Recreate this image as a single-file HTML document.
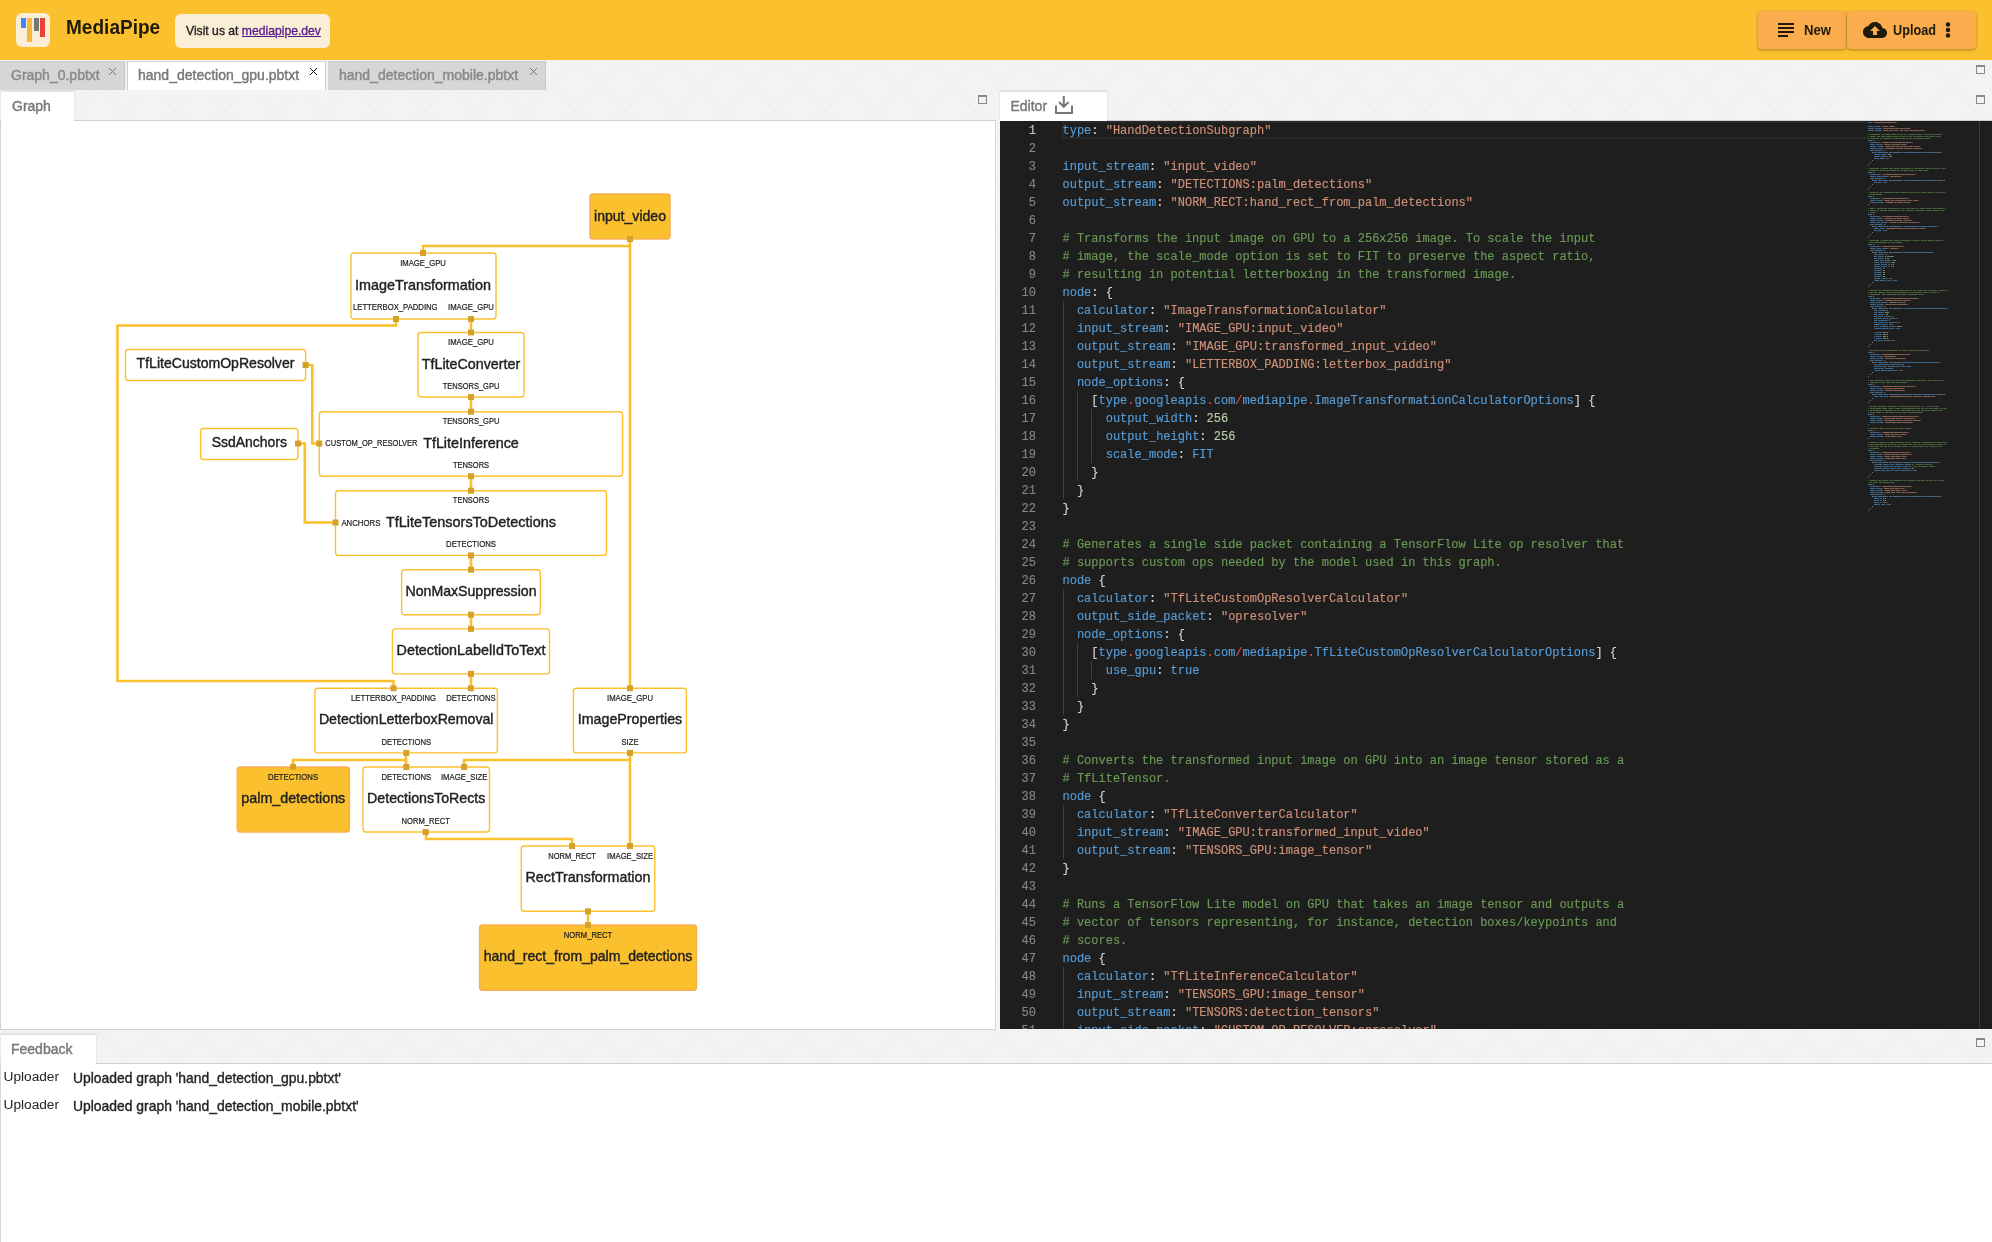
<!DOCTYPE html>
<html><head><meta charset="utf-8">
<style>
html,body{margin:0;padding:0;width:1992px;height:1242px;overflow:hidden;background:#f3f3f3;font-family:"Liberation Sans",sans-serif;}
#root{position:absolute;left:0;top:0;width:1992px;height:1242px;will-change:transform;}
.med{-webkit-text-stroke:0.25px currentColor;}
.a{position:absolute;}
#hdr{left:0;top:0;width:1992px;height:60px;background:#FBC02D;}
.logo{left:16px;top:13px;width:34px;height:34px;background:#FBEED6;border-radius:6px;}
.bar{position:absolute;top:5px;width:5px;}
.brand{left:66px;top:15.3px;font-size:20.6px;font-weight:bold;color:#1f1a0c;transform:scaleX(0.925);transform-origin:0 0;}
.visit{left:175px;top:14px;width:155px;height:34px;background:#FBEED6;border-radius:6px;}
.visit span{position:absolute;left:10.5px;top:9px;font-size:13px;font-weight:normal;color:#222;-webkit-text-stroke:0.35px currentColor;white-space:nowrap;transform:scaleX(0.935);transform-origin:0 0;}
.visit a{color:#551A8B;text-decoration:underline;}
.btn{top:11px;height:38px;background:#FBAC4D;border-radius:4px;box-shadow:0 1px 3px rgba(0,0,0,0.35);}
.btn span{position:absolute;font-size:14px;font-weight:bold;color:#1f1a0c;top:11px;white-space:nowrap;}
.tab{top:61px;height:29px;font-size:14px;color:#888;white-space:nowrap;}
.tab .t{position:absolute;left:11px;top:6px;-webkit-text-stroke:0.4px currentColor;}
.tab.in{background:#d6d6d6;box-shadow:inset -1px 0 0 #c8c8c8, inset 0 1px 0 #cfcfcf;}
.tab.ac{background:#fff;color:#777;box-shadow:inset 1px 0 0 #d0d0d0, inset 0 1px 0 #d8d8d8, 1px 0 0 #cdcdcd;}
.x{position:absolute;width:7px;height:7px;}
.max{width:7px;height:6px;border:1px solid #888;border-top-width:2px;}
.stab{height:30px;background:#fff;font-size:14px;color:#777;white-space:nowrap;box-shadow:0 -1px 2px rgba(0,0,0,0.12);}
.stab .t{position:absolute;left:11px;top:6px;-webkit-text-stroke:0.4px currentColor;}
#editor{left:1000px;top:121px;width:992px;height:908px;background:#1E1E1E;overflow:hidden;}
.ln{position:absolute;left:0;width:36px;text-align:right;font:12px/18px "Liberation Mono",monospace;height:18px;-webkit-text-stroke:0.15px currentColor;}
.cl{position:absolute;left:62.5px;font:12px/18px "Liberation Mono",monospace;white-space:pre;color:#D4D4D4;height:18px;-webkit-text-stroke:0.15px currentColor;}
.ig{position:absolute;width:1px;background:#404040;}
</style></head><body><div id="root">
<svg class="a" style="left:0;top:0" width="1992" height="1242">
<defs><pattern id="diag" width="50" height="50" patternUnits="userSpaceOnUse" x="25" y="10">
<path d="M0,0 L50,50 M50,0 L0,50" stroke="#ececec" stroke-width="1"/></pattern></defs>
<rect x="0" y="60" width="1992" height="1182" fill="url(#diag)"/>
</svg>

<div id="hdr" class="a">
 <div class="a logo">
  <div class="bar" style="left:5px;height:10px;background:#4285F4"></div>
  <div class="bar" style="left:11px;height:23.5px;background:#F6B73C"></div>
  <div class="bar" style="left:18px;height:13px;background:#777"></div>
  <div class="bar" style="left:24px;height:18.5px;background:#EA4335"></div>
 </div>
 <div class="a brand">MediaPipe</div>
 <div class="a visit"><span>Visit us at <a>mediapipe.dev</a></span></div>
 <div class="a btn" style="left:1758px;width:88px;">
  <svg class="a" style="left:20px;top:12px" width="16" height="14"><rect x="0" y="0" width="16" height="2" fill="#1f1a0c"/><rect x="0" y="4" width="16" height="2" fill="#1f1a0c"/><rect x="0" y="8" width="16" height="2" fill="#1f1a0c"/><rect x="0" y="12" width="10" height="2" fill="#1f1a0c"/></svg>
  <span style="left:45.5px;transform:scaleX(0.94);transform-origin:0 0">New</span>
 </div>
 <div class="a btn" style="left:1847px;width:129px;">
  <svg class="a" style="left:16px;top:11px" width="24" height="16" viewBox="0 4 24 16"><path fill="#1f1a0c" d="M19.35 10.04C18.67 6.59 15.64 4 12 4 9.11 4 6.6 5.64 5.35 8.04 2.34 8.36 0 10.91 0 14c0 3.31 2.69 6 6 6h13c2.76 0 5-2.24 5-5 0-2.64-2.05-4.78-4.65-4.96zM14 13v4h-4v-4H7l5-5 5 5h-3z"/></svg>
  <span style="left:45.5px;transform:scaleX(0.905);transform-origin:0 0">Upload</span>
  <svg class="a" style="left:98px;top:11px" width="6" height="16"><circle cx="3" cy="2.5" r="2.2" fill="#1f1a0c"/><circle cx="3" cy="8" r="2.2" fill="#1f1a0c"/><circle cx="3" cy="13.5" r="2.2" fill="#1f1a0c"/></svg>
 </div>
</div>

<!-- top tabs -->
<div class="a tab in" style="left:0;width:125px;"><span class="t">Graph_0.pbtxt</span>
 <svg class="x" style="left:109px;top:7px" width="7" height="7"><path d="M0,0L7,7M7,0L0,7" stroke="#6a6a6a" stroke-width="0.9"/></svg></div>
<div class="a tab ac" style="left:127px;width:198px;"><span class="t">hand_detection_gpu.pbtxt</span>
 <svg class="x" style="left:183px;top:7px" width="7" height="7"><path d="M0,0L7,7M7,0L0,7" stroke="#111" stroke-width="1"/></svg></div>
<div class="a tab in" style="left:328px;width:218px;"><span class="t">hand_detection_mobile.pbtxt</span>
 <svg class="x" style="left:202px;top:7px" width="7" height="7"><path d="M0,0L7,7M7,0L0,7" stroke="#6a6a6a" stroke-width="0.9"/></svg></div>
<div class="a max" style="left:1976px;top:65px;"></div>

<!-- graph stack header -->
<div class="a" style="left:0;top:120px;width:996px;height:1px;background:#cfcfcf"></div>
<div class="a stab" style="left:1px;top:92px;width:73px;height:29px;"><span class="t" style="top:6px">Graph</span></div>
<div class="a max" style="left:978px;top:95px;"></div>
<!-- graph content -->
<div class="a" style="left:0;top:121px;width:996px;height:909px;background:#fff;box-shadow:inset 1px 0 0 #d6d6d6, inset -1px 0 0 #d6d6d6, inset 0 -1px 0 #d0d0d0;"></div>
<svg width="996" height="1029" style="position:absolute;left:0;top:0" font-family='"Liberation Sans", sans-serif'><polyline points="630.0,239.0 630.0,246.0 423.0,246.0 423.0,253.0" fill="none" stroke="#FBC02D" stroke-width="2.6"/><polyline points="630.0,246.0 630.0,688.0" fill="none" stroke="#FBC02D" stroke-width="2.6"/><polyline points="396.0,319.0 396.0,325.5 117.5,325.5 117.5,681.0 393.5,681.0 393.5,688.0" fill="none" stroke="#FBC02D" stroke-width="2.6"/><polyline points="471.0,319.0 471.0,332.5" fill="none" stroke="#FBC02D" stroke-width="2.6"/><polyline points="471.0,397.0 471.0,411.5" fill="none" stroke="#FBC02D" stroke-width="2.6"/><polyline points="305.6,365.0 312.3,365.0 312.3,443.5 319.0,443.5" fill="none" stroke="#FBC02D" stroke-width="2.6"/><polyline points="298.0,443.5 304.8,443.5 304.8,522.5 335.5,522.5" fill="none" stroke="#FBC02D" stroke-width="2.6"/><polyline points="471.0,476.0 471.0,490.5" fill="none" stroke="#FBC02D" stroke-width="2.6"/><polyline points="471.0,555.5 471.0,570.0" fill="none" stroke="#FBC02D" stroke-width="2.6"/><polyline points="471.0,614.5 471.0,629.0" fill="none" stroke="#FBC02D" stroke-width="2.6"/><polyline points="471.0,674.0 471.0,688.0" fill="none" stroke="#FBC02D" stroke-width="2.6"/><polyline points="406.0,753.0 406.0,760.0 293.0,760.0 293.0,767.0" fill="none" stroke="#FBC02D" stroke-width="2.6"/><polyline points="406.0,760.0 406.0,767.0" fill="none" stroke="#FBC02D" stroke-width="2.6"/><polyline points="630.0,753.0 630.0,760.0 464.0,760.0 464.0,767.0" fill="none" stroke="#FBC02D" stroke-width="2.6"/><polyline points="630.0,760.0 630.0,846.0" fill="none" stroke="#FBC02D" stroke-width="2.6"/><polyline points="426.0,832.0 426.0,839.0 572.0,839.0 572.0,846.0" fill="none" stroke="#FBC02D" stroke-width="2.6"/><polyline points="588.0,911.0 588.0,925.0" fill="none" stroke="#FBC02D" stroke-width="2.6"/><rect x="590.0" y="194.0" width="80.0" height="45.0" rx="3" fill="#FBC02D" stroke="#F9AE55" stroke-width="1.5"/><text x="630.0" y="221.2" font-size="14.5" font-weight="normal" text-anchor="middle" textLength="72.0" lengthAdjust="spacingAndGlyphs" fill="#212121" stroke="#212121" stroke-width="0.4">input_video</text><rect x="351.0" y="253.0" width="145.0" height="66.0" rx="3" fill="#fff" stroke="#FBC02D" stroke-width="1.4"/><text x="423.0" y="266.1" font-size="8.6" font-weight="normal" text-anchor="middle" textLength="45.7" lengthAdjust="spacingAndGlyphs" fill="#212121" stroke="#212121" stroke-width="0.2">IMAGE_GPU</text><text x="423.0" y="289.6" font-size="14.5" font-weight="normal" text-anchor="middle" textLength="136.0" lengthAdjust="spacingAndGlyphs" fill="#212121" stroke="#212121" stroke-width="0.4">ImageTransformation</text><text x="395.3" y="310.1" font-size="8.6" font-weight="normal" text-anchor="middle" textLength="84.6" lengthAdjust="spacingAndGlyphs" fill="#212121" stroke="#212121" stroke-width="0.2">LETTERBOX_PADDING</text><text x="471.0" y="310.1" font-size="8.6" font-weight="normal" text-anchor="middle" textLength="45.9" lengthAdjust="spacingAndGlyphs" fill="#212121" stroke="#212121" stroke-width="0.2">IMAGE_GPU</text><rect x="418.0" y="332.5" width="106.0" height="64.5" rx="3" fill="#fff" stroke="#FBC02D" stroke-width="1.4"/><text x="471.0" y="345.1" font-size="8.6" font-weight="normal" text-anchor="middle" textLength="45.9" lengthAdjust="spacingAndGlyphs" fill="#212121" stroke="#212121" stroke-width="0.2">IMAGE_GPU</text><text x="471.0" y="368.6" font-size="14.5" font-weight="normal" text-anchor="middle" textLength="98.5" lengthAdjust="spacingAndGlyphs" fill="#212121" stroke="#212121" stroke-width="0.4">TfLiteConverter</text><text x="471.0" y="388.8" font-size="8.6" font-weight="normal" text-anchor="middle" textLength="56.7" lengthAdjust="spacingAndGlyphs" fill="#212121" stroke="#212121" stroke-width="0.2">TENSORS_GPU</text><rect x="125.5" y="349.5" width="180.1" height="31.0" rx="3" fill="#fff" stroke="#FBC02D" stroke-width="1.4"/><text x="215.5" y="368.3" font-size="14.5" font-weight="normal" text-anchor="middle" textLength="157.8" lengthAdjust="spacingAndGlyphs" fill="#212121" stroke="#212121" stroke-width="0.4">TfLiteCustomOpResolver</text><rect x="200.6" y="428.5" width="97.4" height="31.0" rx="3" fill="#fff" stroke="#FBC02D" stroke-width="1.4"/><text x="249.3" y="447.3" font-size="14.5" font-weight="normal" text-anchor="middle" textLength="75.3" lengthAdjust="spacingAndGlyphs" fill="#212121" stroke="#212121" stroke-width="0.4">SsdAnchors</text><rect x="319.3" y="411.7" width="303.3" height="64.5" rx="3" fill="#fff" stroke="#FBC02D" stroke-width="1.4"/><text x="471.0" y="424.1" font-size="8.6" font-weight="normal" text-anchor="middle" textLength="56.7" lengthAdjust="spacingAndGlyphs" fill="#212121" stroke="#212121" stroke-width="0.2">TENSORS_GPU</text><text x="471.0" y="447.6" font-size="14.5" font-weight="normal" text-anchor="middle" textLength="95.7" lengthAdjust="spacingAndGlyphs" fill="#212121" stroke="#212121" stroke-width="0.4">TfLiteInference</text><text x="471.0" y="467.8" font-size="8.6" font-weight="normal" text-anchor="middle" textLength="36.2" lengthAdjust="spacingAndGlyphs" fill="#212121" stroke="#212121" stroke-width="0.2">TENSORS</text><text x="325.3" y="446.1" font-size="8.6" font-weight="normal" text-anchor="start" textLength="92.2" lengthAdjust="spacingAndGlyphs" fill="#212121" stroke="#212121" stroke-width="0.2">CUSTOM_OP_RESOLVER</text><rect x="335.5" y="490.7" width="271.0" height="64.7" rx="3" fill="#fff" stroke="#FBC02D" stroke-width="1.4"/><text x="471.0" y="503.2" font-size="8.6" font-weight="normal" text-anchor="middle" textLength="36.3" lengthAdjust="spacingAndGlyphs" fill="#212121" stroke="#212121" stroke-width="0.2">TENSORS</text><text x="471.0" y="526.6" font-size="14.5" font-weight="normal" text-anchor="middle" textLength="170.0" lengthAdjust="spacingAndGlyphs" fill="#212121" stroke="#212121" stroke-width="0.4">TfLiteTensorsToDetections</text><text x="471.0" y="547.2" font-size="8.6" font-weight="normal" text-anchor="middle" textLength="49.8" lengthAdjust="spacingAndGlyphs" fill="#212121" stroke="#212121" stroke-width="0.2">DETECTIONS</text><text x="341.4" y="525.6" font-size="8.6" font-weight="normal" text-anchor="start" textLength="39.0" lengthAdjust="spacingAndGlyphs" fill="#212121" stroke="#212121" stroke-width="0.2">ANCHORS</text><rect x="401.6" y="569.7" width="138.7" height="45.0" rx="3" fill="#fff" stroke="#FBC02D" stroke-width="1.4"/><text x="471.0" y="595.6" font-size="14.5" font-weight="normal" text-anchor="middle" textLength="131.0" lengthAdjust="spacingAndGlyphs" fill="#212121" stroke="#212121" stroke-width="0.4">NonMaxSuppression</text><rect x="392.4" y="628.9" width="157.1" height="45.0" rx="3" fill="#fff" stroke="#FBC02D" stroke-width="1.4"/><text x="471.0" y="654.9" font-size="14.5" font-weight="normal" text-anchor="middle" textLength="148.8" lengthAdjust="spacingAndGlyphs" fill="#212121" stroke="#212121" stroke-width="0.4">DetectionLabelIdToText</text><rect x="314.9" y="688.3" width="182.5" height="64.6" rx="3" fill="#fff" stroke="#FBC02D" stroke-width="1.4"/><text x="393.5" y="701.1" font-size="8.6" font-weight="normal" text-anchor="middle" textLength="85.0" lengthAdjust="spacingAndGlyphs" fill="#212121" stroke="#212121" stroke-width="0.2">LETTERBOX_PADDING</text><text x="470.9" y="701.1" font-size="8.6" font-weight="normal" text-anchor="middle" textLength="49.4" lengthAdjust="spacingAndGlyphs" fill="#212121" stroke="#212121" stroke-width="0.2">DETECTIONS</text><text x="406.2" y="724.1" font-size="14.5" font-weight="normal" text-anchor="middle" textLength="174.6" lengthAdjust="spacingAndGlyphs" fill="#212121" stroke="#212121" stroke-width="0.4">DetectionLetterboxRemoval</text><text x="406.3" y="744.9" font-size="8.6" font-weight="normal" text-anchor="middle" textLength="49.7" lengthAdjust="spacingAndGlyphs" fill="#212121" stroke="#212121" stroke-width="0.2">DETECTIONS</text><rect x="573.4" y="688.3" width="113.0" height="64.6" rx="3" fill="#fff" stroke="#FBC02D" stroke-width="1.4"/><text x="630.0" y="701.1" font-size="8.6" font-weight="normal" text-anchor="middle" textLength="46.0" lengthAdjust="spacingAndGlyphs" fill="#212121" stroke="#212121" stroke-width="0.2">IMAGE_GPU</text><text x="630.0" y="724.1" font-size="14.5" font-weight="normal" text-anchor="middle" textLength="104.4" lengthAdjust="spacingAndGlyphs" fill="#212121" stroke="#212121" stroke-width="0.4">ImageProperties</text><text x="630.0" y="744.9" font-size="8.6" font-weight="normal" text-anchor="middle" textLength="17.0" lengthAdjust="spacingAndGlyphs" fill="#212121" stroke="#212121" stroke-width="0.2">SIZE</text><rect x="237.3" y="767.0" width="112.1" height="65.0" rx="3" fill="#FBC02D" stroke="#F9AE55" stroke-width="1.5"/><text x="293.1" y="780.1" font-size="8.6" font-weight="normal" text-anchor="middle" textLength="50.0" lengthAdjust="spacingAndGlyphs" fill="#212121" stroke="#212121" stroke-width="0.2">DETECTIONS</text><text x="293.3" y="803.0" font-size="14.5" font-weight="normal" text-anchor="middle" textLength="103.9" lengthAdjust="spacingAndGlyphs" fill="#212121" stroke="#212121" stroke-width="0.4">palm_detections</text><rect x="363.0" y="767.0" width="126.5" height="65.0" rx="3" fill="#fff" stroke="#FBC02D" stroke-width="1.4"/><text x="406.3" y="780.1" font-size="8.6" font-weight="normal" text-anchor="middle" textLength="49.7" lengthAdjust="spacingAndGlyphs" fill="#212121" stroke="#212121" stroke-width="0.2">DETECTIONS</text><text x="464.2" y="780.1" font-size="8.6" font-weight="normal" text-anchor="middle" textLength="46.5" lengthAdjust="spacingAndGlyphs" fill="#212121" stroke="#212121" stroke-width="0.2">IMAGE_SIZE</text><text x="426.2" y="803.0" font-size="14.5" font-weight="normal" text-anchor="middle" textLength="118.3" lengthAdjust="spacingAndGlyphs" fill="#212121" stroke="#212121" stroke-width="0.4">DetectionsToRects</text><text x="425.7" y="823.6" font-size="8.6" font-weight="normal" text-anchor="middle" textLength="48.4" lengthAdjust="spacingAndGlyphs" fill="#212121" stroke="#212121" stroke-width="0.2">NORM_RECT</text><rect x="521.3" y="846.0" width="133.5" height="65.3" rx="3" fill="#fff" stroke="#FBC02D" stroke-width="1.4"/><text x="572.1" y="859.1" font-size="8.6" font-weight="normal" text-anchor="middle" textLength="47.8" lengthAdjust="spacingAndGlyphs" fill="#212121" stroke="#212121" stroke-width="0.2">NORM_RECT</text><text x="630.0" y="859.1" font-size="8.6" font-weight="normal" text-anchor="middle" textLength="46.0" lengthAdjust="spacingAndGlyphs" fill="#212121" stroke="#212121" stroke-width="0.2">IMAGE_SIZE</text><text x="588.0" y="881.9" font-size="14.5" font-weight="normal" text-anchor="middle" textLength="124.9" lengthAdjust="spacingAndGlyphs" fill="#212121" stroke="#212121" stroke-width="0.4">RectTransformation</text><rect x="479.6" y="925.1" width="216.9" height="65.1" rx="3" fill="#FBC02D" stroke="#F9AE55" stroke-width="1.5"/><text x="588.0" y="938.1" font-size="8.6" font-weight="normal" text-anchor="middle" textLength="48.4" lengthAdjust="spacingAndGlyphs" fill="#212121" stroke="#212121" stroke-width="0.2">NORM_RECT</text><text x="588.0" y="961.0" font-size="14.5" font-weight="normal" text-anchor="middle" textLength="208.6" lengthAdjust="spacingAndGlyphs" fill="#212121" stroke="#212121" stroke-width="0.4">hand_rect_from_palm_detections</text><rect x="627.0" y="236.0" width="6" height="6" fill="#D4A22A"/><rect x="420.0" y="250.0" width="6" height="6" fill="#D4A22A"/><rect x="393.0" y="316.0" width="6" height="6" fill="#D4A22A"/><rect x="468.0" y="316.0" width="6" height="6" fill="#D4A22A"/><rect x="468.0" y="329.5" width="6" height="6" fill="#D4A22A"/><rect x="468.0" y="394.0" width="6" height="6" fill="#D4A22A"/><rect x="302.6" y="362.0" width="6" height="6" fill="#D4A22A"/><rect x="295.0" y="440.5" width="6" height="6" fill="#D4A22A"/><rect x="468.0" y="408.7" width="6" height="6" fill="#D4A22A"/><rect x="316.3" y="440.5" width="6" height="6" fill="#D4A22A"/><rect x="468.0" y="473.2" width="6" height="6" fill="#D4A22A"/><rect x="468.0" y="487.7" width="6" height="6" fill="#D4A22A"/><rect x="332.5" y="519.5" width="6" height="6" fill="#D4A22A"/><rect x="468.0" y="552.4" width="6" height="6" fill="#D4A22A"/><rect x="468.0" y="566.7" width="6" height="6" fill="#D4A22A"/><rect x="468.0" y="611.7" width="6" height="6" fill="#D4A22A"/><rect x="468.0" y="625.9" width="6" height="6" fill="#D4A22A"/><rect x="468.0" y="670.9" width="6" height="6" fill="#D4A22A"/><rect x="390.5" y="685.3" width="6" height="6" fill="#D4A22A"/><rect x="467.9" y="685.3" width="6" height="6" fill="#D4A22A"/><rect x="403.3" y="749.9" width="6" height="6" fill="#D4A22A"/><rect x="627.0" y="685.3" width="6" height="6" fill="#D4A22A"/><rect x="627.0" y="749.9" width="6" height="6" fill="#D4A22A"/><rect x="290.1" y="764.0" width="6" height="6" fill="#D4A22A"/><rect x="403.3" y="764.0" width="6" height="6" fill="#D4A22A"/><rect x="461.2" y="764.0" width="6" height="6" fill="#D4A22A"/><rect x="422.7" y="829.0" width="6" height="6" fill="#D4A22A"/><rect x="569.1" y="843.0" width="6" height="6" fill="#D4A22A"/><rect x="627.0" y="843.0" width="6" height="6" fill="#D4A22A"/><rect x="585.0" y="908.3" width="6" height="6" fill="#D4A22A"/><rect x="585.0" y="922.1" width="6" height="6" fill="#D4A22A"/></svg>

<!-- editor stack header -->
<div class="a" style="left:1000px;top:120px;width:992px;height:1px;background:#cfcfcf"></div>
<div class="a stab" style="left:1000px;top:92px;width:107px;height:29px;"><span class="t" style="top:5.5px;left:10.5px">Editor</span>
 <svg class="a" style="left:55px;top:4px" width="18" height="18"><path d="M8.8,0V11M4,6L8.8,10.8L13.6,6" fill="none" stroke="#777" stroke-width="2"/><path d="M1,9.5V17H17V9.5" fill="none" stroke="#777" stroke-width="2"/></svg></div>
<div class="a max" style="left:1976px;top:95px;"></div>
<div id="editor" class="a">
<div class="a" style="left:62px;top:0;width:806px;height:18px;box-sizing:border-box;border:2px solid #282828;border-right:none;"></div>
<div class="ig" style="left:62.5px;top:180px;height:198px"></div>
<div class="ig" style="left:62.5px;top:468px;height:126px"></div>
<div class="ig" style="left:62.5px;top:684px;height:54px"></div>
<div class="ig" style="left:62.5px;top:846px;height:72px"></div>
<div class="ig" style="left:76.9px;top:270px;height:90px"></div>
<div class="ig" style="left:76.9px;top:522px;height:54px"></div>
<div class="ig" style="left:91.3px;top:288px;height:54px"></div>
<div class="ig" style="left:91.3px;top:540px;height:18px"></div>
<div class="ln" style="top:1px;color:#C6C6C6">1</div>
<div class="cl" style="top:1px"><span style="color:#569CD6">type</span><span style="color:#D4D4D4">:</span> <span style="color:#CE9178">&quot;HandDetectionSubgraph&quot;</span></div>
<div class="ln" style="top:19px;color:#858585">2</div>
<div class="cl" style="top:19px"></div>
<div class="ln" style="top:37px;color:#858585">3</div>
<div class="cl" style="top:37px"><span style="color:#569CD6">input_stream</span><span style="color:#D4D4D4">:</span> <span style="color:#CE9178">&quot;input_video&quot;</span></div>
<div class="ln" style="top:55px;color:#858585">4</div>
<div class="cl" style="top:55px"><span style="color:#569CD6">output_stream</span><span style="color:#D4D4D4">:</span> <span style="color:#CE9178">&quot;DETECTIONS:palm_detections&quot;</span></div>
<div class="ln" style="top:73px;color:#858585">5</div>
<div class="cl" style="top:73px"><span style="color:#569CD6">output_stream</span><span style="color:#D4D4D4">:</span> <span style="color:#CE9178">&quot;NORM_RECT:hand_rect_from_palm_detections&quot;</span></div>
<div class="ln" style="top:91px;color:#858585">6</div>
<div class="cl" style="top:91px"></div>
<div class="ln" style="top:109px;color:#858585">7</div>
<div class="cl" style="top:109px"><span style="color:#6A9955"># Transforms the input image on GPU to a 256x256 image. To scale the input</span></div>
<div class="ln" style="top:127px;color:#858585">8</div>
<div class="cl" style="top:127px"><span style="color:#6A9955"># image, the scale_mode option is set to FIT to preserve the aspect ratio,</span></div>
<div class="ln" style="top:145px;color:#858585">9</div>
<div class="cl" style="top:145px"><span style="color:#6A9955"># resulting in potential letterboxing in the transformed image.</span></div>
<div class="ln" style="top:163px;color:#858585">10</div>
<div class="cl" style="top:163px"><span style="color:#569CD6">node</span><span style="color:#D4D4D4">:</span> <span style="color:#D4D4D4">{</span></div>
<div class="ln" style="top:181px;color:#858585">11</div>
<div class="cl" style="top:181px">  <span style="color:#569CD6">calculator</span><span style="color:#D4D4D4">:</span> <span style="color:#CE9178">&quot;ImageTransformationCalculator&quot;</span></div>
<div class="ln" style="top:199px;color:#858585">12</div>
<div class="cl" style="top:199px">  <span style="color:#569CD6">input_stream</span><span style="color:#D4D4D4">:</span> <span style="color:#CE9178">&quot;IMAGE_GPU:input_video&quot;</span></div>
<div class="ln" style="top:217px;color:#858585">13</div>
<div class="cl" style="top:217px">  <span style="color:#569CD6">output_stream</span><span style="color:#D4D4D4">:</span> <span style="color:#CE9178">&quot;IMAGE_GPU:transformed_input_video&quot;</span></div>
<div class="ln" style="top:235px;color:#858585">14</div>
<div class="cl" style="top:235px">  <span style="color:#569CD6">output_stream</span><span style="color:#D4D4D4">:</span> <span style="color:#CE9178">&quot;LETTERBOX_PADDING:letterbox_padding&quot;</span></div>
<div class="ln" style="top:253px;color:#858585">15</div>
<div class="cl" style="top:253px">  <span style="color:#569CD6">node_options</span><span style="color:#D4D4D4">:</span> <span style="color:#D4D4D4">{</span></div>
<div class="ln" style="top:271px;color:#858585">16</div>
<div class="cl" style="top:271px">    <span style="color:#D4D4D4">[</span><span style="color:#569CD6">type</span><span style="color:#F44747">.</span><span style="color:#569CD6">googleapis</span><span style="color:#F44747">.</span><span style="color:#569CD6">com</span><span style="color:#F44747">/</span><span style="color:#569CD6">mediapipe</span><span style="color:#F44747">.</span><span style="color:#569CD6">ImageTransformationCalculatorOptions</span><span style="color:#D4D4D4">]</span> <span style="color:#D4D4D4">{</span></div>
<div class="ln" style="top:289px;color:#858585">17</div>
<div class="cl" style="top:289px">      <span style="color:#569CD6">output_width</span><span style="color:#D4D4D4">:</span> <span style="color:#B5CEA8">256</span></div>
<div class="ln" style="top:307px;color:#858585">18</div>
<div class="cl" style="top:307px">      <span style="color:#569CD6">output_height</span><span style="color:#D4D4D4">:</span> <span style="color:#B5CEA8">256</span></div>
<div class="ln" style="top:325px;color:#858585">19</div>
<div class="cl" style="top:325px">      <span style="color:#569CD6">scale_mode</span><span style="color:#D4D4D4">:</span> <span style="color:#569CD6">FIT</span></div>
<div class="ln" style="top:343px;color:#858585">20</div>
<div class="cl" style="top:343px">    <span style="color:#D4D4D4">}</span></div>
<div class="ln" style="top:361px;color:#858585">21</div>
<div class="cl" style="top:361px">  <span style="color:#D4D4D4">}</span></div>
<div class="ln" style="top:379px;color:#858585">22</div>
<div class="cl" style="top:379px"><span style="color:#D4D4D4">}</span></div>
<div class="ln" style="top:397px;color:#858585">23</div>
<div class="cl" style="top:397px"></div>
<div class="ln" style="top:415px;color:#858585">24</div>
<div class="cl" style="top:415px"><span style="color:#6A9955"># Generates a single side packet containing a TensorFlow Lite op resolver that</span></div>
<div class="ln" style="top:433px;color:#858585">25</div>
<div class="cl" style="top:433px"><span style="color:#6A9955"># supports custom ops needed by the model used in this graph.</span></div>
<div class="ln" style="top:451px;color:#858585">26</div>
<div class="cl" style="top:451px"><span style="color:#569CD6">node</span> <span style="color:#D4D4D4">{</span></div>
<div class="ln" style="top:469px;color:#858585">27</div>
<div class="cl" style="top:469px">  <span style="color:#569CD6">calculator</span><span style="color:#D4D4D4">:</span> <span style="color:#CE9178">&quot;TfLiteCustomOpResolverCalculator&quot;</span></div>
<div class="ln" style="top:487px;color:#858585">28</div>
<div class="cl" style="top:487px">  <span style="color:#569CD6">output_side_packet</span><span style="color:#D4D4D4">:</span> <span style="color:#CE9178">&quot;opresolver&quot;</span></div>
<div class="ln" style="top:505px;color:#858585">29</div>
<div class="cl" style="top:505px">  <span style="color:#569CD6">node_options</span><span style="color:#D4D4D4">:</span> <span style="color:#D4D4D4">{</span></div>
<div class="ln" style="top:523px;color:#858585">30</div>
<div class="cl" style="top:523px">    <span style="color:#D4D4D4">[</span><span style="color:#569CD6">type</span><span style="color:#F44747">.</span><span style="color:#569CD6">googleapis</span><span style="color:#F44747">.</span><span style="color:#569CD6">com</span><span style="color:#F44747">/</span><span style="color:#569CD6">mediapipe</span><span style="color:#F44747">.</span><span style="color:#569CD6">TfLiteCustomOpResolverCalculatorOptions</span><span style="color:#D4D4D4">]</span> <span style="color:#D4D4D4">{</span></div>
<div class="ln" style="top:541px;color:#858585">31</div>
<div class="cl" style="top:541px">      <span style="color:#569CD6">use_gpu</span><span style="color:#D4D4D4">:</span> <span style="color:#569CD6">true</span></div>
<div class="ln" style="top:559px;color:#858585">32</div>
<div class="cl" style="top:559px">    <span style="color:#D4D4D4">}</span></div>
<div class="ln" style="top:577px;color:#858585">33</div>
<div class="cl" style="top:577px">  <span style="color:#D4D4D4">}</span></div>
<div class="ln" style="top:595px;color:#858585">34</div>
<div class="cl" style="top:595px"><span style="color:#D4D4D4">}</span></div>
<div class="ln" style="top:613px;color:#858585">35</div>
<div class="cl" style="top:613px"></div>
<div class="ln" style="top:631px;color:#858585">36</div>
<div class="cl" style="top:631px"><span style="color:#6A9955"># Converts the transformed input image on GPU into an image tensor stored as a</span></div>
<div class="ln" style="top:649px;color:#858585">37</div>
<div class="cl" style="top:649px"><span style="color:#6A9955"># TfLiteTensor.</span></div>
<div class="ln" style="top:667px;color:#858585">38</div>
<div class="cl" style="top:667px"><span style="color:#569CD6">node</span> <span style="color:#D4D4D4">{</span></div>
<div class="ln" style="top:685px;color:#858585">39</div>
<div class="cl" style="top:685px">  <span style="color:#569CD6">calculator</span><span style="color:#D4D4D4">:</span> <span style="color:#CE9178">&quot;TfLiteConverterCalculator&quot;</span></div>
<div class="ln" style="top:703px;color:#858585">40</div>
<div class="cl" style="top:703px">  <span style="color:#569CD6">input_stream</span><span style="color:#D4D4D4">:</span> <span style="color:#CE9178">&quot;IMAGE_GPU:transformed_input_video&quot;</span></div>
<div class="ln" style="top:721px;color:#858585">41</div>
<div class="cl" style="top:721px">  <span style="color:#569CD6">output_stream</span><span style="color:#D4D4D4">:</span> <span style="color:#CE9178">&quot;TENSORS_GPU:image_tensor&quot;</span></div>
<div class="ln" style="top:739px;color:#858585">42</div>
<div class="cl" style="top:739px"><span style="color:#D4D4D4">}</span></div>
<div class="ln" style="top:757px;color:#858585">43</div>
<div class="cl" style="top:757px"></div>
<div class="ln" style="top:775px;color:#858585">44</div>
<div class="cl" style="top:775px"><span style="color:#6A9955"># Runs a TensorFlow Lite model on GPU that takes an image tensor and outputs a</span></div>
<div class="ln" style="top:793px;color:#858585">45</div>
<div class="cl" style="top:793px"><span style="color:#6A9955"># vector of tensors representing, for instance, detection boxes/keypoints and</span></div>
<div class="ln" style="top:811px;color:#858585">46</div>
<div class="cl" style="top:811px"><span style="color:#6A9955"># scores.</span></div>
<div class="ln" style="top:829px;color:#858585">47</div>
<div class="cl" style="top:829px"><span style="color:#569CD6">node</span> <span style="color:#D4D4D4">{</span></div>
<div class="ln" style="top:847px;color:#858585">48</div>
<div class="cl" style="top:847px">  <span style="color:#569CD6">calculator</span><span style="color:#D4D4D4">:</span> <span style="color:#CE9178">&quot;TfLiteInferenceCalculator&quot;</span></div>
<div class="ln" style="top:865px;color:#858585">49</div>
<div class="cl" style="top:865px">  <span style="color:#569CD6">input_stream</span><span style="color:#D4D4D4">:</span> <span style="color:#CE9178">&quot;TENSORS_GPU:image_tensor&quot;</span></div>
<div class="ln" style="top:883px;color:#858585">50</div>
<div class="cl" style="top:883px">  <span style="color:#569CD6">output_stream</span><span style="color:#D4D4D4">:</span> <span style="color:#CE9178">&quot;TENSORS:detection_tensors&quot;</span></div>
<div class="ln" style="top:901px;color:#858585">51</div>
<div class="cl" style="top:901px">  <span style="color:#569CD6">input_side_packet</span><span style="color:#D4D4D4">:</span> <span style="color:#CE9178">&quot;CUSTOM_OP_RESOLVER:opresolver&quot;</span></div>
<svg width="111" height="908" style="position:absolute;left:868px;top:0"><g font-family='"Liberation Mono", monospace' font-size="1.6667" font-weight="bold" stroke-width="0.12" opacity="0.8"><text x="0" y="1.70" xml:space="preserve"><tspan fill="#569CD6" stroke="#569CD6">type</tspan><tspan fill="#D4D4D4" stroke="#D4D4D4">:</tspan> <tspan fill="#CE9178" stroke="#CE9178">&quot;HandDetectionSubgraph&quot;</tspan></text><text x="0" y="5.70" xml:space="preserve"><tspan fill="#569CD6" stroke="#569CD6">input_stream</tspan><tspan fill="#D4D4D4" stroke="#D4D4D4">:</tspan> <tspan fill="#CE9178" stroke="#CE9178">&quot;input_video&quot;</tspan></text><text x="0" y="7.70" xml:space="preserve"><tspan fill="#569CD6" stroke="#569CD6">output_stream</tspan><tspan fill="#D4D4D4" stroke="#D4D4D4">:</tspan> <tspan fill="#CE9178" stroke="#CE9178">&quot;DETECTIONS:palm_detections&quot;</tspan></text><text x="0" y="9.70" xml:space="preserve"><tspan fill="#569CD6" stroke="#569CD6">output_stream</tspan><tspan fill="#D4D4D4" stroke="#D4D4D4">:</tspan> <tspan fill="#CE9178" stroke="#CE9178">&quot;NORM_RECT:hand_rect_from_palm_detections&quot;</tspan></text><text x="0" y="13.70" xml:space="preserve"><tspan fill="#6A9955" stroke="#6A9955"># Transforms the input image on GPU to a 256x256 image. To scale the input</tspan></text><text x="0" y="15.70" xml:space="preserve"><tspan fill="#6A9955" stroke="#6A9955"># image, the scale_mode option is set to FIT to preserve the aspect ratio,</tspan></text><text x="0" y="17.70" xml:space="preserve"><tspan fill="#6A9955" stroke="#6A9955"># resulting in potential letterboxing in the transformed image.</tspan></text><text x="0" y="19.70" xml:space="preserve"><tspan fill="#569CD6" stroke="#569CD6">node</tspan><tspan fill="#D4D4D4" stroke="#D4D4D4">:</tspan> <tspan fill="#D4D4D4" stroke="#D4D4D4">{</tspan></text><text x="0" y="21.70" xml:space="preserve">  <tspan fill="#569CD6" stroke="#569CD6">calculator</tspan><tspan fill="#D4D4D4" stroke="#D4D4D4">:</tspan> <tspan fill="#CE9178" stroke="#CE9178">&quot;ImageTransformationCalculator&quot;</tspan></text><text x="0" y="23.70" xml:space="preserve">  <tspan fill="#569CD6" stroke="#569CD6">input_stream</tspan><tspan fill="#D4D4D4" stroke="#D4D4D4">:</tspan> <tspan fill="#CE9178" stroke="#CE9178">&quot;IMAGE_GPU:input_video&quot;</tspan></text><text x="0" y="25.70" xml:space="preserve">  <tspan fill="#569CD6" stroke="#569CD6">output_stream</tspan><tspan fill="#D4D4D4" stroke="#D4D4D4">:</tspan> <tspan fill="#CE9178" stroke="#CE9178">&quot;IMAGE_GPU:transformed_input_video&quot;</tspan></text><text x="0" y="27.70" xml:space="preserve">  <tspan fill="#569CD6" stroke="#569CD6">output_stream</tspan><tspan fill="#D4D4D4" stroke="#D4D4D4">:</tspan> <tspan fill="#CE9178" stroke="#CE9178">&quot;LETTERBOX_PADDING:letterbox_padding&quot;</tspan></text><text x="0" y="29.70" xml:space="preserve">  <tspan fill="#569CD6" stroke="#569CD6">node_options</tspan><tspan fill="#D4D4D4" stroke="#D4D4D4">:</tspan> <tspan fill="#D4D4D4" stroke="#D4D4D4">{</tspan></text><text x="0" y="31.70" xml:space="preserve">    <tspan fill="#D4D4D4" stroke="#D4D4D4">[</tspan><tspan fill="#569CD6" stroke="#569CD6">type</tspan><tspan fill="#F44747" stroke="#F44747">.</tspan><tspan fill="#569CD6" stroke="#569CD6">googleapis</tspan><tspan fill="#F44747" stroke="#F44747">.</tspan><tspan fill="#569CD6" stroke="#569CD6">com</tspan><tspan fill="#F44747" stroke="#F44747">/</tspan><tspan fill="#569CD6" stroke="#569CD6">mediapipe</tspan><tspan fill="#F44747" stroke="#F44747">.</tspan><tspan fill="#569CD6" stroke="#569CD6">ImageTransformationCalculatorOptions</tspan><tspan fill="#D4D4D4" stroke="#D4D4D4">]</tspan> <tspan fill="#D4D4D4" stroke="#D4D4D4">{</tspan></text><text x="0" y="33.70" xml:space="preserve">      <tspan fill="#569CD6" stroke="#569CD6">output_width</tspan><tspan fill="#D4D4D4" stroke="#D4D4D4">:</tspan> <tspan fill="#B5CEA8" stroke="#B5CEA8">256</tspan></text><text x="0" y="35.70" xml:space="preserve">      <tspan fill="#569CD6" stroke="#569CD6">output_height</tspan><tspan fill="#D4D4D4" stroke="#D4D4D4">:</tspan> <tspan fill="#B5CEA8" stroke="#B5CEA8">256</tspan></text><text x="0" y="37.70" xml:space="preserve">      <tspan fill="#569CD6" stroke="#569CD6">scale_mode</tspan><tspan fill="#D4D4D4" stroke="#D4D4D4">:</tspan> <tspan fill="#569CD6" stroke="#569CD6">FIT</tspan></text><text x="0" y="39.70" xml:space="preserve">    <tspan fill="#D4D4D4" stroke="#D4D4D4">}</tspan></text><text x="0" y="41.70" xml:space="preserve">  <tspan fill="#D4D4D4" stroke="#D4D4D4">}</tspan></text><text x="0" y="43.70" xml:space="preserve"><tspan fill="#D4D4D4" stroke="#D4D4D4">}</tspan></text><text x="0" y="47.70" xml:space="preserve"><tspan fill="#6A9955" stroke="#6A9955"># Generates a single side packet containing a TensorFlow Lite op resolver that</tspan></text><text x="0" y="49.70" xml:space="preserve"><tspan fill="#6A9955" stroke="#6A9955"># supports custom ops needed by the model used in this graph.</tspan></text><text x="0" y="51.70" xml:space="preserve"><tspan fill="#569CD6" stroke="#569CD6">node</tspan> <tspan fill="#D4D4D4" stroke="#D4D4D4">{</tspan></text><text x="0" y="53.70" xml:space="preserve">  <tspan fill="#569CD6" stroke="#569CD6">calculator</tspan><tspan fill="#D4D4D4" stroke="#D4D4D4">:</tspan> <tspan fill="#CE9178" stroke="#CE9178">&quot;TfLiteCustomOpResolverCalculator&quot;</tspan></text><text x="0" y="55.70" xml:space="preserve">  <tspan fill="#569CD6" stroke="#569CD6">output_side_packet</tspan><tspan fill="#D4D4D4" stroke="#D4D4D4">:</tspan> <tspan fill="#CE9178" stroke="#CE9178">&quot;opresolver&quot;</tspan></text><text x="0" y="57.70" xml:space="preserve">  <tspan fill="#569CD6" stroke="#569CD6">node_options</tspan><tspan fill="#D4D4D4" stroke="#D4D4D4">:</tspan> <tspan fill="#D4D4D4" stroke="#D4D4D4">{</tspan></text><text x="0" y="59.70" xml:space="preserve">    <tspan fill="#D4D4D4" stroke="#D4D4D4">[</tspan><tspan fill="#569CD6" stroke="#569CD6">type</tspan><tspan fill="#F44747" stroke="#F44747">.</tspan><tspan fill="#569CD6" stroke="#569CD6">googleapis</tspan><tspan fill="#F44747" stroke="#F44747">.</tspan><tspan fill="#569CD6" stroke="#569CD6">com</tspan><tspan fill="#F44747" stroke="#F44747">/</tspan><tspan fill="#569CD6" stroke="#569CD6">mediapipe</tspan><tspan fill="#F44747" stroke="#F44747">.</tspan><tspan fill="#569CD6" stroke="#569CD6">TfLiteCustomOpResolverCalculatorOptions</tspan><tspan fill="#D4D4D4" stroke="#D4D4D4">]</tspan> <tspan fill="#D4D4D4" stroke="#D4D4D4">{</tspan></text><text x="0" y="61.70" xml:space="preserve">      <tspan fill="#569CD6" stroke="#569CD6">use_gpu</tspan><tspan fill="#D4D4D4" stroke="#D4D4D4">:</tspan> <tspan fill="#569CD6" stroke="#569CD6">true</tspan></text><text x="0" y="63.70" xml:space="preserve">    <tspan fill="#D4D4D4" stroke="#D4D4D4">}</tspan></text><text x="0" y="65.70" xml:space="preserve">  <tspan fill="#D4D4D4" stroke="#D4D4D4">}</tspan></text><text x="0" y="67.70" xml:space="preserve"><tspan fill="#D4D4D4" stroke="#D4D4D4">}</tspan></text><text x="0" y="71.70" xml:space="preserve"><tspan fill="#6A9955" stroke="#6A9955"># Converts the transformed input image on GPU into an image tensor stored as a</tspan></text><text x="0" y="73.70" xml:space="preserve"><tspan fill="#6A9955" stroke="#6A9955"># TfLiteTensor.</tspan></text><text x="0" y="75.70" xml:space="preserve"><tspan fill="#569CD6" stroke="#569CD6">node</tspan> <tspan fill="#D4D4D4" stroke="#D4D4D4">{</tspan></text><text x="0" y="77.70" xml:space="preserve">  <tspan fill="#569CD6" stroke="#569CD6">calculator</tspan><tspan fill="#D4D4D4" stroke="#D4D4D4">:</tspan> <tspan fill="#CE9178" stroke="#CE9178">&quot;TfLiteConverterCalculator&quot;</tspan></text><text x="0" y="79.70" xml:space="preserve">  <tspan fill="#569CD6" stroke="#569CD6">input_stream</tspan><tspan fill="#D4D4D4" stroke="#D4D4D4">:</tspan> <tspan fill="#CE9178" stroke="#CE9178">&quot;IMAGE_GPU:transformed_input_video&quot;</tspan></text><text x="0" y="81.70" xml:space="preserve">  <tspan fill="#569CD6" stroke="#569CD6">output_stream</tspan><tspan fill="#D4D4D4" stroke="#D4D4D4">:</tspan> <tspan fill="#CE9178" stroke="#CE9178">&quot;TENSORS_GPU:image_tensor&quot;</tspan></text><text x="0" y="83.70" xml:space="preserve"><tspan fill="#D4D4D4" stroke="#D4D4D4">}</tspan></text><text x="0" y="87.70" xml:space="preserve"><tspan fill="#6A9955" stroke="#6A9955"># Runs a TensorFlow Lite model on GPU that takes an image tensor and outputs a</tspan></text><text x="0" y="89.70" xml:space="preserve"><tspan fill="#6A9955" stroke="#6A9955"># vector of tensors representing, for instance, detection boxes/keypoints and</tspan></text><text x="0" y="91.70" xml:space="preserve"><tspan fill="#6A9955" stroke="#6A9955"># scores.</tspan></text><text x="0" y="93.70" xml:space="preserve"><tspan fill="#569CD6" stroke="#569CD6">node</tspan> <tspan fill="#D4D4D4" stroke="#D4D4D4">{</tspan></text><text x="0" y="95.70" xml:space="preserve">  <tspan fill="#569CD6" stroke="#569CD6">calculator</tspan><tspan fill="#D4D4D4" stroke="#D4D4D4">:</tspan> <tspan fill="#CE9178" stroke="#CE9178">&quot;TfLiteInferenceCalculator&quot;</tspan></text><text x="0" y="97.70" xml:space="preserve">  <tspan fill="#569CD6" stroke="#569CD6">input_stream</tspan><tspan fill="#D4D4D4" stroke="#D4D4D4">:</tspan> <tspan fill="#CE9178" stroke="#CE9178">&quot;TENSORS_GPU:image_tensor&quot;</tspan></text><text x="0" y="99.70" xml:space="preserve">  <tspan fill="#569CD6" stroke="#569CD6">output_stream</tspan><tspan fill="#D4D4D4" stroke="#D4D4D4">:</tspan> <tspan fill="#CE9178" stroke="#CE9178">&quot;TENSORS:detection_tensors&quot;</tspan></text><text x="0" y="101.70" xml:space="preserve">  <tspan fill="#569CD6" stroke="#569CD6">input_side_packet</tspan><tspan fill="#D4D4D4" stroke="#D4D4D4">:</tspan> <tspan fill="#CE9178" stroke="#CE9178">&quot;CUSTOM_OP_RESOLVER:opresolver&quot;</tspan></text><text x="0" y="103.70" xml:space="preserve">  <tspan fill="#569CD6" stroke="#569CD6">node_options</tspan><tspan fill="#D4D4D4" stroke="#D4D4D4">:</tspan> <tspan fill="#D4D4D4" stroke="#D4D4D4">{</tspan></text><text x="0" y="105.70" xml:space="preserve">    <tspan fill="#D4D4D4" stroke="#D4D4D4">[</tspan><tspan fill="#569CD6" stroke="#569CD6">type</tspan><tspan fill="#F44747" stroke="#F44747">.</tspan><tspan fill="#569CD6" stroke="#569CD6">googleapis</tspan><tspan fill="#F44747" stroke="#F44747">.</tspan><tspan fill="#569CD6" stroke="#569CD6">com</tspan><tspan fill="#F44747" stroke="#F44747">/</tspan><tspan fill="#569CD6" stroke="#569CD6">mediapipe</tspan><tspan fill="#F44747" stroke="#F44747">.</tspan><tspan fill="#569CD6" stroke="#569CD6">TfLiteInferenceCalculatorOptions</tspan><tspan fill="#D4D4D4" stroke="#D4D4D4">]</tspan> <tspan fill="#D4D4D4" stroke="#D4D4D4">{</tspan></text><text x="0" y="107.70" xml:space="preserve">      <tspan fill="#569CD6" stroke="#569CD6">model_path</tspan><tspan fill="#D4D4D4" stroke="#D4D4D4">:</tspan> <tspan fill="#CE9178" stroke="#CE9178">&quot;mediapipe/models/palm_detection.tflite&quot;</tspan></text><text x="0" y="109.70" xml:space="preserve">      <tspan fill="#569CD6" stroke="#569CD6">use_gpu</tspan><tspan fill="#D4D4D4" stroke="#D4D4D4">:</tspan> <tspan fill="#569CD6" stroke="#569CD6">true</tspan></text><text x="0" y="111.70" xml:space="preserve">    <tspan fill="#D4D4D4" stroke="#D4D4D4">}</tspan></text><text x="0" y="113.70" xml:space="preserve">  <tspan fill="#D4D4D4" stroke="#D4D4D4">}</tspan></text><text x="0" y="115.70" xml:space="preserve"><tspan fill="#D4D4D4" stroke="#D4D4D4">}</tspan></text><text x="0" y="119.70" xml:space="preserve"><tspan fill="#6A9955" stroke="#6A9955"># Generates a single side packet containing a vector of SSD anchors based on</tspan></text><text x="0" y="121.70" xml:space="preserve"><tspan fill="#6A9955" stroke="#6A9955"># the specification in the options.</tspan></text><text x="0" y="123.70" xml:space="preserve"><tspan fill="#569CD6" stroke="#569CD6">node</tspan> <tspan fill="#D4D4D4" stroke="#D4D4D4">{</tspan></text><text x="0" y="125.70" xml:space="preserve">  <tspan fill="#569CD6" stroke="#569CD6">calculator</tspan><tspan fill="#D4D4D4" stroke="#D4D4D4">:</tspan> <tspan fill="#CE9178" stroke="#CE9178">&quot;SsdAnchorsCalculator&quot;</tspan></text><text x="0" y="127.70" xml:space="preserve">  <tspan fill="#569CD6" stroke="#569CD6">output_side_packet</tspan><tspan fill="#D4D4D4" stroke="#D4D4D4">:</tspan> <tspan fill="#CE9178" stroke="#CE9178">&quot;anchors&quot;</tspan></text><text x="0" y="129.70" xml:space="preserve">  <tspan fill="#569CD6" stroke="#569CD6">node_options</tspan><tspan fill="#D4D4D4" stroke="#D4D4D4">:</tspan> <tspan fill="#D4D4D4" stroke="#D4D4D4">{</tspan></text><text x="0" y="131.70" xml:space="preserve">    <tspan fill="#D4D4D4" stroke="#D4D4D4">[</tspan><tspan fill="#569CD6" stroke="#569CD6">type</tspan><tspan fill="#F44747" stroke="#F44747">.</tspan><tspan fill="#569CD6" stroke="#569CD6">googleapis</tspan><tspan fill="#F44747" stroke="#F44747">.</tspan><tspan fill="#569CD6" stroke="#569CD6">com</tspan><tspan fill="#F44747" stroke="#F44747">/</tspan><tspan fill="#569CD6" stroke="#569CD6">mediapipe</tspan><tspan fill="#F44747" stroke="#F44747">.</tspan><tspan fill="#569CD6" stroke="#569CD6">SsdAnchorsCalculatorOptions</tspan><tspan fill="#D4D4D4" stroke="#D4D4D4">]</tspan> <tspan fill="#D4D4D4" stroke="#D4D4D4">{</tspan></text><text x="0" y="133.70" xml:space="preserve">      <tspan fill="#569CD6" stroke="#569CD6">num_layers</tspan><tspan fill="#D4D4D4" stroke="#D4D4D4">:</tspan> <tspan fill="#B5CEA8" stroke="#B5CEA8">5</tspan></text><text x="0" y="135.70" xml:space="preserve">      <tspan fill="#569CD6" stroke="#569CD6">min_scale</tspan><tspan fill="#D4D4D4" stroke="#D4D4D4">:</tspan> <tspan fill="#B5CEA8" stroke="#B5CEA8">0.1171875</tspan></text><text x="0" y="137.70" xml:space="preserve">      <tspan fill="#569CD6" stroke="#569CD6">max_scale</tspan><tspan fill="#D4D4D4" stroke="#D4D4D4">:</tspan> <tspan fill="#B5CEA8" stroke="#B5CEA8">0.75</tspan></text><text x="0" y="139.70" xml:space="preserve">      <tspan fill="#569CD6" stroke="#569CD6">input_size_height</tspan><tspan fill="#D4D4D4" stroke="#D4D4D4">:</tspan> <tspan fill="#B5CEA8" stroke="#B5CEA8">256</tspan></text><text x="0" y="141.70" xml:space="preserve">      <tspan fill="#569CD6" stroke="#569CD6">input_size_width</tspan><tspan fill="#D4D4D4" stroke="#D4D4D4">:</tspan> <tspan fill="#B5CEA8" stroke="#B5CEA8">256</tspan></text><text x="0" y="143.70" xml:space="preserve">      <tspan fill="#569CD6" stroke="#569CD6">anchor_offset_x</tspan><tspan fill="#D4D4D4" stroke="#D4D4D4">:</tspan> <tspan fill="#B5CEA8" stroke="#B5CEA8">0.5</tspan></text><text x="0" y="145.70" xml:space="preserve">      <tspan fill="#569CD6" stroke="#569CD6">anchor_offset_y</tspan><tspan fill="#D4D4D4" stroke="#D4D4D4">:</tspan> <tspan fill="#B5CEA8" stroke="#B5CEA8">0.5</tspan></text><text x="0" y="147.70" xml:space="preserve">      <tspan fill="#569CD6" stroke="#569CD6">strides</tspan><tspan fill="#D4D4D4" stroke="#D4D4D4">:</tspan> <tspan fill="#B5CEA8" stroke="#B5CEA8">8</tspan></text><text x="0" y="149.70" xml:space="preserve">      <tspan fill="#569CD6" stroke="#569CD6">strides</tspan><tspan fill="#D4D4D4" stroke="#D4D4D4">:</tspan> <tspan fill="#B5CEA8" stroke="#B5CEA8">16</tspan></text><text x="0" y="151.70" xml:space="preserve">      <tspan fill="#569CD6" stroke="#569CD6">strides</tspan><tspan fill="#D4D4D4" stroke="#D4D4D4">:</tspan> <tspan fill="#B5CEA8" stroke="#B5CEA8">32</tspan></text><text x="0" y="153.70" xml:space="preserve">      <tspan fill="#569CD6" stroke="#569CD6">strides</tspan><tspan fill="#D4D4D4" stroke="#D4D4D4">:</tspan> <tspan fill="#B5CEA8" stroke="#B5CEA8">32</tspan></text><text x="0" y="155.70" xml:space="preserve">      <tspan fill="#569CD6" stroke="#569CD6">strides</tspan><tspan fill="#D4D4D4" stroke="#D4D4D4">:</tspan> <tspan fill="#B5CEA8" stroke="#B5CEA8">32</tspan></text><text x="0" y="157.70" xml:space="preserve">      <tspan fill="#569CD6" stroke="#569CD6">aspect_ratios</tspan><tspan fill="#D4D4D4" stroke="#D4D4D4">:</tspan> <tspan fill="#B5CEA8" stroke="#B5CEA8">1.0</tspan></text><text x="0" y="159.70" xml:space="preserve">      <tspan fill="#569CD6" stroke="#569CD6">fixed_anchor_size</tspan><tspan fill="#D4D4D4" stroke="#D4D4D4">:</tspan> <tspan fill="#569CD6" stroke="#569CD6">true</tspan></text><text x="0" y="161.70" xml:space="preserve">    <tspan fill="#D4D4D4" stroke="#D4D4D4">}</tspan></text><text x="0" y="163.70" xml:space="preserve">  <tspan fill="#D4D4D4" stroke="#D4D4D4">}</tspan></text><text x="0" y="165.70" xml:space="preserve"><tspan fill="#D4D4D4" stroke="#D4D4D4">}</tspan></text><text x="0" y="169.70" xml:space="preserve"><tspan fill="#6A9955" stroke="#6A9955"># Decodes the detection tensors generated by the TensorFlow Lite model, based on</tspan></text><text x="0" y="171.70" xml:space="preserve"><tspan fill="#6A9955" stroke="#6A9955"># the SSD anchors and the specification in the options, into a vector of</tspan></text><text x="0" y="173.70" xml:space="preserve"><tspan fill="#6A9955" stroke="#6A9955"># detections. Each detection describes a detected object.</tspan></text><text x="0" y="175.70" xml:space="preserve"><tspan fill="#569CD6" stroke="#569CD6">node</tspan> <tspan fill="#D4D4D4" stroke="#D4D4D4">{</tspan></text><text x="0" y="177.70" xml:space="preserve">  <tspan fill="#569CD6" stroke="#569CD6">calculator</tspan><tspan fill="#D4D4D4" stroke="#D4D4D4">:</tspan> <tspan fill="#CE9178" stroke="#CE9178">&quot;TfLiteTensorsToDetectionsCalculator&quot;</tspan></text><text x="0" y="179.70" xml:space="preserve">  <tspan fill="#569CD6" stroke="#569CD6">input_stream</tspan><tspan fill="#D4D4D4" stroke="#D4D4D4">:</tspan> <tspan fill="#CE9178" stroke="#CE9178">&quot;TENSORS:detection_tensors&quot;</tspan></text><text x="0" y="181.70" xml:space="preserve">  <tspan fill="#569CD6" stroke="#569CD6">input_side_packet</tspan><tspan fill="#D4D4D4" stroke="#D4D4D4">:</tspan> <tspan fill="#CE9178" stroke="#CE9178">&quot;ANCHORS:anchors&quot;</tspan></text><text x="0" y="183.70" xml:space="preserve">  <tspan fill="#569CD6" stroke="#569CD6">output_stream</tspan><tspan fill="#D4D4D4" stroke="#D4D4D4">:</tspan> <tspan fill="#CE9178" stroke="#CE9178">&quot;DETECTIONS:detections&quot;</tspan></text><text x="0" y="185.70" xml:space="preserve">  <tspan fill="#569CD6" stroke="#569CD6">node_options</tspan><tspan fill="#D4D4D4" stroke="#D4D4D4">:</tspan> <tspan fill="#D4D4D4" stroke="#D4D4D4">{</tspan></text><text x="0" y="187.70" xml:space="preserve">    <tspan fill="#D4D4D4" stroke="#D4D4D4">[</tspan><tspan fill="#569CD6" stroke="#569CD6">type</tspan><tspan fill="#F44747" stroke="#F44747">.</tspan><tspan fill="#569CD6" stroke="#569CD6">googleapis</tspan><tspan fill="#F44747" stroke="#F44747">.</tspan><tspan fill="#569CD6" stroke="#569CD6">com</tspan><tspan fill="#F44747" stroke="#F44747">/</tspan><tspan fill="#569CD6" stroke="#569CD6">mediapipe</tspan><tspan fill="#F44747" stroke="#F44747">.</tspan><tspan fill="#569CD6" stroke="#569CD6">TfLiteTensorsToDetectionsCalculatorOptions</tspan><tspan fill="#D4D4D4" stroke="#D4D4D4">]</tspan> <tspan fill="#D4D4D4" stroke="#D4D4D4">{</tspan></text><text x="0" y="189.70" xml:space="preserve">      <tspan fill="#569CD6" stroke="#569CD6">num_classes</tspan><tspan fill="#D4D4D4" stroke="#D4D4D4">:</tspan> <tspan fill="#B5CEA8" stroke="#B5CEA8">1</tspan></text><text x="0" y="191.70" xml:space="preserve">      <tspan fill="#569CD6" stroke="#569CD6">num_boxes</tspan><tspan fill="#D4D4D4" stroke="#D4D4D4">:</tspan> <tspan fill="#B5CEA8" stroke="#B5CEA8">2944</tspan></text><text x="0" y="193.70" xml:space="preserve">      <tspan fill="#569CD6" stroke="#569CD6">num_coords</tspan><tspan fill="#D4D4D4" stroke="#D4D4D4">:</tspan> <tspan fill="#B5CEA8" stroke="#B5CEA8">18</tspan></text><text x="0" y="195.70" xml:space="preserve">      <tspan fill="#569CD6" stroke="#569CD6">box_coord_offset</tspan><tspan fill="#D4D4D4" stroke="#D4D4D4">:</tspan> <tspan fill="#B5CEA8" stroke="#B5CEA8">0</tspan></text><text x="0" y="197.70" xml:space="preserve">      <tspan fill="#569CD6" stroke="#569CD6">keypoint_coord_offset</tspan><tspan fill="#D4D4D4" stroke="#D4D4D4">:</tspan> <tspan fill="#B5CEA8" stroke="#B5CEA8">4</tspan></text><text x="0" y="199.70" xml:space="preserve">      <tspan fill="#569CD6" stroke="#569CD6">num_keypoints</tspan><tspan fill="#D4D4D4" stroke="#D4D4D4">:</tspan> <tspan fill="#B5CEA8" stroke="#B5CEA8">7</tspan></text><text x="0" y="201.70" xml:space="preserve">      <tspan fill="#569CD6" stroke="#569CD6">num_values_per_keypoint</tspan><tspan fill="#D4D4D4" stroke="#D4D4D4">:</tspan> <tspan fill="#B5CEA8" stroke="#B5CEA8">2</tspan></text><text x="0" y="203.70" xml:space="preserve">      <tspan fill="#569CD6" stroke="#569CD6">sigmoid_score</tspan><tspan fill="#D4D4D4" stroke="#D4D4D4">:</tspan> <tspan fill="#569CD6" stroke="#569CD6">true</tspan></text><text x="0" y="205.70" xml:space="preserve">      <tspan fill="#569CD6" stroke="#569CD6">score_clipping_thresh</tspan><tspan fill="#D4D4D4" stroke="#D4D4D4">:</tspan> <tspan fill="#B5CEA8" stroke="#B5CEA8">100.0</tspan></text><text x="0" y="207.70" xml:space="preserve">      <tspan fill="#569CD6" stroke="#569CD6">reverse_output_order</tspan><tspan fill="#D4D4D4" stroke="#D4D4D4">:</tspan> <tspan fill="#569CD6" stroke="#569CD6">true</tspan></text><text x="0" y="211.70" xml:space="preserve">      <tspan fill="#569CD6" stroke="#569CD6">x_scale</tspan><tspan fill="#D4D4D4" stroke="#D4D4D4">:</tspan> <tspan fill="#B5CEA8" stroke="#B5CEA8">256.0</tspan></text><text x="0" y="213.70" xml:space="preserve">      <tspan fill="#569CD6" stroke="#569CD6">y_scale</tspan><tspan fill="#D4D4D4" stroke="#D4D4D4">:</tspan> <tspan fill="#B5CEA8" stroke="#B5CEA8">256.0</tspan></text><text x="0" y="215.70" xml:space="preserve">      <tspan fill="#569CD6" stroke="#569CD6">h_scale</tspan><tspan fill="#D4D4D4" stroke="#D4D4D4">:</tspan> <tspan fill="#B5CEA8" stroke="#B5CEA8">256.0</tspan></text><text x="0" y="217.70" xml:space="preserve">      <tspan fill="#569CD6" stroke="#569CD6">w_scale</tspan><tspan fill="#D4D4D4" stroke="#D4D4D4">:</tspan> <tspan fill="#B5CEA8" stroke="#B5CEA8">256.0</tspan></text><text x="0" y="219.70" xml:space="preserve">      <tspan fill="#569CD6" stroke="#569CD6">min_score_thresh</tspan><tspan fill="#D4D4D4" stroke="#D4D4D4">:</tspan> <tspan fill="#B5CEA8" stroke="#B5CEA8">0.7</tspan></text><text x="0" y="221.70" xml:space="preserve">    <tspan fill="#D4D4D4" stroke="#D4D4D4">}</tspan></text><text x="0" y="223.70" xml:space="preserve">  <tspan fill="#D4D4D4" stroke="#D4D4D4">}</tspan></text><text x="0" y="225.70" xml:space="preserve"><tspan fill="#D4D4D4" stroke="#D4D4D4">}</tspan></text><text x="0" y="229.70" xml:space="preserve"><tspan fill="#6A9955" stroke="#6A9955"># Performs non-max suppression to remove excessive detections.</tspan></text><text x="0" y="231.70" xml:space="preserve"><tspan fill="#569CD6" stroke="#569CD6">node</tspan> <tspan fill="#D4D4D4" stroke="#D4D4D4">{</tspan></text><text x="0" y="233.70" xml:space="preserve">  <tspan fill="#569CD6" stroke="#569CD6">calculator</tspan><tspan fill="#D4D4D4" stroke="#D4D4D4">:</tspan> <tspan fill="#CE9178" stroke="#CE9178">&quot;NonMaxSuppressionCalculator&quot;</tspan></text><text x="0" y="235.70" xml:space="preserve">  <tspan fill="#569CD6" stroke="#569CD6">input_stream</tspan><tspan fill="#D4D4D4" stroke="#D4D4D4">:</tspan> <tspan fill="#CE9178" stroke="#CE9178">&quot;detections&quot;</tspan></text><text x="0" y="237.70" xml:space="preserve">  <tspan fill="#569CD6" stroke="#569CD6">output_stream</tspan><tspan fill="#D4D4D4" stroke="#D4D4D4">:</tspan> <tspan fill="#CE9178" stroke="#CE9178">&quot;filtered_detections&quot;</tspan></text><text x="0" y="239.70" xml:space="preserve">  <tspan fill="#569CD6" stroke="#569CD6">node_options</tspan><tspan fill="#D4D4D4" stroke="#D4D4D4">:</tspan> <tspan fill="#D4D4D4" stroke="#D4D4D4">{</tspan></text><text x="0" y="241.70" xml:space="preserve">    <tspan fill="#D4D4D4" stroke="#D4D4D4">[</tspan><tspan fill="#569CD6" stroke="#569CD6">type</tspan><tspan fill="#F44747" stroke="#F44747">.</tspan><tspan fill="#569CD6" stroke="#569CD6">googleapis</tspan><tspan fill="#F44747" stroke="#F44747">.</tspan><tspan fill="#569CD6" stroke="#569CD6">com</tspan><tspan fill="#F44747" stroke="#F44747">/</tspan><tspan fill="#569CD6" stroke="#569CD6">mediapipe</tspan><tspan fill="#F44747" stroke="#F44747">.</tspan><tspan fill="#569CD6" stroke="#569CD6">NonMaxSuppressionCalculatorOptions</tspan><tspan fill="#D4D4D4" stroke="#D4D4D4">]</tspan> <tspan fill="#D4D4D4" stroke="#D4D4D4">{</tspan></text><text x="0" y="243.70" xml:space="preserve">      <tspan fill="#569CD6" stroke="#569CD6">min_suppression_threshold</tspan><tspan fill="#D4D4D4" stroke="#D4D4D4">:</tspan> <tspan fill="#B5CEA8" stroke="#B5CEA8">0.3</tspan></text><text x="0" y="245.70" xml:space="preserve">      <tspan fill="#569CD6" stroke="#569CD6">overlap_type</tspan><tspan fill="#D4D4D4" stroke="#D4D4D4">:</tspan> <tspan fill="#569CD6" stroke="#569CD6">INTERSECTION_OVER_UNION</tspan></text><text x="0" y="247.70" xml:space="preserve">      <tspan fill="#569CD6" stroke="#569CD6">algorithm</tspan><tspan fill="#D4D4D4" stroke="#D4D4D4">:</tspan> <tspan fill="#569CD6" stroke="#569CD6">WEIGHTED</tspan></text><text x="0" y="249.70" xml:space="preserve">      <tspan fill="#569CD6" stroke="#569CD6">return_empty_detections</tspan><tspan fill="#D4D4D4" stroke="#D4D4D4">:</tspan> <tspan fill="#569CD6" stroke="#569CD6">true</tspan></text><text x="0" y="251.70" xml:space="preserve">    <tspan fill="#D4D4D4" stroke="#D4D4D4">}</tspan></text><text x="0" y="253.70" xml:space="preserve">  <tspan fill="#D4D4D4" stroke="#D4D4D4">}</tspan></text><text x="0" y="255.70" xml:space="preserve"><tspan fill="#D4D4D4" stroke="#D4D4D4">}</tspan></text><text x="0" y="259.70" xml:space="preserve"><tspan fill="#6A9955" stroke="#6A9955"># Maps detection label IDs to the corresponding label text. The label map is</tspan></text><text x="0" y="261.70" xml:space="preserve"><tspan fill="#6A9955" stroke="#6A9955"># provided in the label_map_path option.</tspan></text><text x="0" y="263.70" xml:space="preserve"><tspan fill="#569CD6" stroke="#569CD6">node</tspan> <tspan fill="#D4D4D4" stroke="#D4D4D4">{</tspan></text><text x="0" y="265.70" xml:space="preserve">  <tspan fill="#569CD6" stroke="#569CD6">calculator</tspan><tspan fill="#D4D4D4" stroke="#D4D4D4">:</tspan> <tspan fill="#CE9178" stroke="#CE9178">&quot;DetectionLabelIdToTextCalculator&quot;</tspan></text><text x="0" y="267.70" xml:space="preserve">  <tspan fill="#569CD6" stroke="#569CD6">input_stream</tspan><tspan fill="#D4D4D4" stroke="#D4D4D4">:</tspan> <tspan fill="#CE9178" stroke="#CE9178">&quot;filtered_detections&quot;</tspan></text><text x="0" y="269.70" xml:space="preserve">  <tspan fill="#569CD6" stroke="#569CD6">output_stream</tspan><tspan fill="#D4D4D4" stroke="#D4D4D4">:</tspan> <tspan fill="#CE9178" stroke="#CE9178">&quot;labeled_detections&quot;</tspan></text><text x="0" y="271.70" xml:space="preserve">  <tspan fill="#569CD6" stroke="#569CD6">node_options</tspan><tspan fill="#D4D4D4" stroke="#D4D4D4">:</tspan> <tspan fill="#D4D4D4" stroke="#D4D4D4">{</tspan></text><text x="0" y="273.70" xml:space="preserve">    <tspan fill="#D4D4D4" stroke="#D4D4D4">[</tspan><tspan fill="#569CD6" stroke="#569CD6">type</tspan><tspan fill="#F44747" stroke="#F44747">.</tspan><tspan fill="#569CD6" stroke="#569CD6">googleapis</tspan><tspan fill="#F44747" stroke="#F44747">.</tspan><tspan fill="#569CD6" stroke="#569CD6">com</tspan><tspan fill="#F44747" stroke="#F44747">/</tspan><tspan fill="#569CD6" stroke="#569CD6">mediapipe</tspan><tspan fill="#F44747" stroke="#F44747">.</tspan><tspan fill="#569CD6" stroke="#569CD6">DetectionLabelIdToTextCalculatorOptions</tspan><tspan fill="#D4D4D4" stroke="#D4D4D4">]</tspan> <tspan fill="#D4D4D4" stroke="#D4D4D4">{</tspan></text><text x="0" y="275.70" xml:space="preserve">      <tspan fill="#569CD6" stroke="#569CD6">label_map_path</tspan><tspan fill="#D4D4D4" stroke="#D4D4D4">:</tspan> <tspan fill="#CE9178" stroke="#CE9178">&quot;mediapipe/models/palm_detection_labelmap.txt&quot;</tspan></text><text x="0" y="277.70" xml:space="preserve">    <tspan fill="#D4D4D4" stroke="#D4D4D4">}</tspan></text><text x="0" y="279.70" xml:space="preserve">  <tspan fill="#D4D4D4" stroke="#D4D4D4">}</tspan></text><text x="0" y="281.70" xml:space="preserve"><tspan fill="#D4D4D4" stroke="#D4D4D4">}</tspan></text><text x="0" y="285.70" xml:space="preserve"><tspan fill="#6A9955" stroke="#6A9955"># Adjusts detection locations (already normalized to [0.f, 1.f]) on the</tspan></text><text x="0" y="287.70" xml:space="preserve"><tspan fill="#6A9955" stroke="#6A9955"># letterboxed image (after image transformation with the FIT scale mode) to the</tspan></text><text x="0" y="289.70" xml:space="preserve"><tspan fill="#6A9955" stroke="#6A9955"># corresponding locations on the same image with the letterbox removed (the</tspan></text><text x="0" y="291.70" xml:space="preserve"><tspan fill="#6A9955" stroke="#6A9955"># input image to the graph before image transformation).</tspan></text><text x="0" y="293.70" xml:space="preserve"><tspan fill="#569CD6" stroke="#569CD6">node</tspan> <tspan fill="#D4D4D4" stroke="#D4D4D4">{</tspan></text><text x="0" y="295.70" xml:space="preserve">  <tspan fill="#569CD6" stroke="#569CD6">calculator</tspan><tspan fill="#D4D4D4" stroke="#D4D4D4">:</tspan> <tspan fill="#CE9178" stroke="#CE9178">&quot;DetectionLetterboxRemovalCalculator&quot;</tspan></text><text x="0" y="297.70" xml:space="preserve">  <tspan fill="#569CD6" stroke="#569CD6">input_stream</tspan><tspan fill="#D4D4D4" stroke="#D4D4D4">:</tspan> <tspan fill="#CE9178" stroke="#CE9178">&quot;DETECTIONS:labeled_detections&quot;</tspan></text><text x="0" y="299.70" xml:space="preserve">  <tspan fill="#569CD6" stroke="#569CD6">input_stream</tspan><tspan fill="#D4D4D4" stroke="#D4D4D4">:</tspan> <tspan fill="#CE9178" stroke="#CE9178">&quot;LETTERBOX_PADDING:letterbox_padding&quot;</tspan></text><text x="0" y="301.70" xml:space="preserve">  <tspan fill="#569CD6" stroke="#569CD6">output_stream</tspan><tspan fill="#D4D4D4" stroke="#D4D4D4">:</tspan> <tspan fill="#CE9178" stroke="#CE9178">&quot;DETECTIONS:palm_detections&quot;</tspan></text><text x="0" y="303.70" xml:space="preserve"><tspan fill="#D4D4D4" stroke="#D4D4D4">}</tspan></text><text x="0" y="307.70" xml:space="preserve"><tspan fill="#6A9955" stroke="#6A9955"># Extracts image size from the input images.</tspan></text><text x="0" y="309.70" xml:space="preserve"><tspan fill="#569CD6" stroke="#569CD6">node</tspan> <tspan fill="#D4D4D4" stroke="#D4D4D4">{</tspan></text><text x="0" y="311.70" xml:space="preserve">  <tspan fill="#569CD6" stroke="#569CD6">calculator</tspan><tspan fill="#D4D4D4" stroke="#D4D4D4">:</tspan> <tspan fill="#CE9178" stroke="#CE9178">&quot;ImagePropertiesCalculator&quot;</tspan></text><text x="0" y="313.70" xml:space="preserve">  <tspan fill="#569CD6" stroke="#569CD6">input_stream</tspan><tspan fill="#D4D4D4" stroke="#D4D4D4">:</tspan> <tspan fill="#CE9178" stroke="#CE9178">&quot;IMAGE_GPU:input_video&quot;</tspan></text><text x="0" y="315.70" xml:space="preserve">  <tspan fill="#569CD6" stroke="#569CD6">output_stream</tspan><tspan fill="#D4D4D4" stroke="#D4D4D4">:</tspan> <tspan fill="#CE9178" stroke="#CE9178">&quot;SIZE:image_size&quot;</tspan></text><text x="0" y="317.70" xml:space="preserve"><tspan fill="#D4D4D4" stroke="#D4D4D4">}</tspan></text><text x="0" y="321.70" xml:space="preserve"><tspan fill="#6A9955" stroke="#6A9955"># Converts results of palm detection into a rectangle (normalized by image size)</tspan></text><text x="0" y="323.70" xml:space="preserve"><tspan fill="#6A9955" stroke="#6A9955"># that encloses the palm and is rotated such that the line connecting center of</tspan></text><text x="0" y="325.70" xml:space="preserve"><tspan fill="#6A9955" stroke="#6A9955"># the wrist and MCP of the middle finger is aligned with the Y-axis of the</tspan></text><text x="0" y="327.70" xml:space="preserve"><tspan fill="#6A9955" stroke="#6A9955"># rectangle.</tspan></text><text x="0" y="329.70" xml:space="preserve"><tspan fill="#569CD6" stroke="#569CD6">node</tspan> <tspan fill="#D4D4D4" stroke="#D4D4D4">{</tspan></text><text x="0" y="331.70" xml:space="preserve">  <tspan fill="#569CD6" stroke="#569CD6">calculator</tspan><tspan fill="#D4D4D4" stroke="#D4D4D4">:</tspan> <tspan fill="#CE9178" stroke="#CE9178">&quot;DetectionsToRectsCalculator&quot;</tspan></text><text x="0" y="333.70" xml:space="preserve">  <tspan fill="#569CD6" stroke="#569CD6">input_stream</tspan><tspan fill="#D4D4D4" stroke="#D4D4D4">:</tspan> <tspan fill="#CE9178" stroke="#CE9178">&quot;DETECTIONS:palm_detections&quot;</tspan></text><text x="0" y="335.70" xml:space="preserve">  <tspan fill="#569CD6" stroke="#569CD6">input_stream</tspan><tspan fill="#D4D4D4" stroke="#D4D4D4">:</tspan> <tspan fill="#CE9178" stroke="#CE9178">&quot;IMAGE_SIZE:image_size&quot;</tspan></text><text x="0" y="337.70" xml:space="preserve">  <tspan fill="#569CD6" stroke="#569CD6">output_stream</tspan><tspan fill="#D4D4D4" stroke="#D4D4D4">:</tspan> <tspan fill="#CE9178" stroke="#CE9178">&quot;NORM_RECT:palm_rect&quot;</tspan></text><text x="0" y="339.70" xml:space="preserve">  <tspan fill="#569CD6" stroke="#569CD6">node_options</tspan><tspan fill="#D4D4D4" stroke="#D4D4D4">:</tspan> <tspan fill="#D4D4D4" stroke="#D4D4D4">{</tspan></text><text x="0" y="341.70" xml:space="preserve">    <tspan fill="#D4D4D4" stroke="#D4D4D4">[</tspan><tspan fill="#569CD6" stroke="#569CD6">type</tspan><tspan fill="#F44747" stroke="#F44747">.</tspan><tspan fill="#569CD6" stroke="#569CD6">googleapis</tspan><tspan fill="#F44747" stroke="#F44747">.</tspan><tspan fill="#569CD6" stroke="#569CD6">com</tspan><tspan fill="#F44747" stroke="#F44747">/</tspan><tspan fill="#569CD6" stroke="#569CD6">mediapipe</tspan><tspan fill="#F44747" stroke="#F44747">.</tspan><tspan fill="#569CD6" stroke="#569CD6">DetectionsToRectsCalculatorOptions</tspan><tspan fill="#D4D4D4" stroke="#D4D4D4">]</tspan> <tspan fill="#D4D4D4" stroke="#D4D4D4">{</tspan></text><text x="0" y="343.70" xml:space="preserve">      <tspan fill="#569CD6" stroke="#569CD6">rotation_vector_start_keypoint_index</tspan><tspan fill="#D4D4D4" stroke="#D4D4D4">:</tspan> <tspan fill="#B5CEA8" stroke="#B5CEA8">0</tspan>  <tspan fill="#6A9955" stroke="#6A9955"># Center of wrist.</tspan></text><text x="0" y="345.70" xml:space="preserve">      <tspan fill="#569CD6" stroke="#569CD6">rotation_vector_end_keypoint_index</tspan><tspan fill="#D4D4D4" stroke="#D4D4D4">:</tspan> <tspan fill="#B5CEA8" stroke="#B5CEA8">2</tspan>  <tspan fill="#6A9955" stroke="#6A9955"># MCP of middle finger.</tspan></text><text x="0" y="347.70" xml:space="preserve">      <tspan fill="#569CD6" stroke="#569CD6">rotation_vector_target_angle_degrees</tspan><tspan fill="#D4D4D4" stroke="#D4D4D4">:</tspan> <tspan fill="#B5CEA8" stroke="#B5CEA8">90</tspan></text><text x="0" y="349.70" xml:space="preserve">      <tspan fill="#569CD6" stroke="#569CD6">output_zero_rect_for_empty_detections</tspan><tspan fill="#D4D4D4" stroke="#D4D4D4">:</tspan> <tspan fill="#569CD6" stroke="#569CD6">true</tspan></text><text x="0" y="351.70" xml:space="preserve">    <tspan fill="#D4D4D4" stroke="#D4D4D4">}</tspan></text><text x="0" y="353.70" xml:space="preserve">  <tspan fill="#D4D4D4" stroke="#D4D4D4">}</tspan></text><text x="0" y="355.70" xml:space="preserve"><tspan fill="#D4D4D4" stroke="#D4D4D4">}</tspan></text><text x="0" y="359.70" xml:space="preserve"><tspan fill="#6A9955" stroke="#6A9955"># Expands and shifts the rectangle that contains the palm so that it&#x27;s likely</tspan></text><text x="0" y="361.70" xml:space="preserve"><tspan fill="#6A9955" stroke="#6A9955"># to cover the entire hand.</tspan></text><text x="0" y="363.70" xml:space="preserve"><tspan fill="#569CD6" stroke="#569CD6">node</tspan> <tspan fill="#D4D4D4" stroke="#D4D4D4">{</tspan></text><text x="0" y="365.70" xml:space="preserve">  <tspan fill="#569CD6" stroke="#569CD6">calculator</tspan><tspan fill="#D4D4D4" stroke="#D4D4D4">:</tspan> <tspan fill="#CE9178" stroke="#CE9178">&quot;RectTransformationCalculator&quot;</tspan></text><text x="0" y="367.70" xml:space="preserve">  <tspan fill="#569CD6" stroke="#569CD6">input_stream</tspan><tspan fill="#D4D4D4" stroke="#D4D4D4">:</tspan> <tspan fill="#CE9178" stroke="#CE9178">&quot;NORM_RECT:palm_rect&quot;</tspan></text><text x="0" y="369.70" xml:space="preserve">  <tspan fill="#569CD6" stroke="#569CD6">input_stream</tspan><tspan fill="#D4D4D4" stroke="#D4D4D4">:</tspan> <tspan fill="#CE9178" stroke="#CE9178">&quot;IMAGE_SIZE:image_size&quot;</tspan></text><text x="0" y="371.70" xml:space="preserve">  <tspan fill="#569CD6" stroke="#569CD6">output_stream</tspan><tspan fill="#D4D4D4" stroke="#D4D4D4">:</tspan> <tspan fill="#CE9178" stroke="#CE9178">&quot;hand_rect_from_palm_detections&quot;</tspan></text><text x="0" y="373.70" xml:space="preserve">  <tspan fill="#569CD6" stroke="#569CD6">node_options</tspan><tspan fill="#D4D4D4" stroke="#D4D4D4">:</tspan> <tspan fill="#D4D4D4" stroke="#D4D4D4">{</tspan></text><text x="0" y="375.70" xml:space="preserve">    <tspan fill="#D4D4D4" stroke="#D4D4D4">[</tspan><tspan fill="#569CD6" stroke="#569CD6">type</tspan><tspan fill="#F44747" stroke="#F44747">.</tspan><tspan fill="#569CD6" stroke="#569CD6">googleapis</tspan><tspan fill="#F44747" stroke="#F44747">.</tspan><tspan fill="#569CD6" stroke="#569CD6">com</tspan><tspan fill="#F44747" stroke="#F44747">/</tspan><tspan fill="#569CD6" stroke="#569CD6">mediapipe</tspan><tspan fill="#F44747" stroke="#F44747">.</tspan><tspan fill="#569CD6" stroke="#569CD6">RectTransformationCalculatorOptions</tspan><tspan fill="#D4D4D4" stroke="#D4D4D4">]</tspan> <tspan fill="#D4D4D4" stroke="#D4D4D4">{</tspan></text><text x="0" y="377.70" xml:space="preserve">      <tspan fill="#569CD6" stroke="#569CD6">scale_x</tspan><tspan fill="#D4D4D4" stroke="#D4D4D4">:</tspan> <tspan fill="#B5CEA8" stroke="#B5CEA8">2.6</tspan></text><text x="0" y="379.70" xml:space="preserve">      <tspan fill="#569CD6" stroke="#569CD6">scale_y</tspan><tspan fill="#D4D4D4" stroke="#D4D4D4">:</tspan> <tspan fill="#B5CEA8" stroke="#B5CEA8">2.6</tspan></text><text x="0" y="381.70" xml:space="preserve">      <tspan fill="#569CD6" stroke="#569CD6">shift_y</tspan><tspan fill="#D4D4D4" stroke="#D4D4D4">:</tspan> <tspan fill="#B5CEA8" stroke="#B5CEA8">-0.5</tspan></text><text x="0" y="383.70" xml:space="preserve">      <tspan fill="#569CD6" stroke="#569CD6">square_long</tspan><tspan fill="#D4D4D4" stroke="#D4D4D4">:</tspan> <tspan fill="#569CD6" stroke="#569CD6">true</tspan></text><text x="0" y="385.70" xml:space="preserve">    <tspan fill="#D4D4D4" stroke="#D4D4D4">}</tspan></text><text x="0" y="387.70" xml:space="preserve">  <tspan fill="#D4D4D4" stroke="#D4D4D4">}</tspan></text><text x="0" y="389.70" xml:space="preserve"><tspan fill="#D4D4D4" stroke="#D4D4D4">}</tspan></text></g></svg>
<div class="a" style="left:979px;top:0;width:1px;height:908px;background:#3a3a3a"></div>
</div>

<!-- feedback -->
<div class="a" style="left:0;top:1063px;width:1992px;height:1px;background:#cfcfcf"></div>
<div class="a stab" style="left:1px;top:1035px;width:95px;height:29px;"><span class="t" style="top:6px;left:10px">Feedback</span></div>
<div class="a max" style="left:1976px;top:1038px;"></div>
<div class="a" style="left:0;top:1064px;width:1992px;height:178px;background:#fff;box-shadow:inset 1px 0 0 #d6d6d6;"></div>
<div class="a" style="left:3.5px;top:1068.5px;font-size:13.7px;color:#222;">Uploader</div>
<div class="a" style="left:73px;top:1069.5px;font-size:13.9px;color:#222;-webkit-text-stroke:0.35px #222;">Uploaded graph 'hand_detection_gpu.pbtxt'</div>
<div class="a" style="left:3.5px;top:1096.5px;font-size:13.7px;color:#222;">Uploader</div>
<div class="a" style="left:73px;top:1097.5px;font-size:13.9px;color:#222;-webkit-text-stroke:0.35px #222;">Uploaded graph 'hand_detection_mobile.pbtxt'</div>
</div></body></html>
